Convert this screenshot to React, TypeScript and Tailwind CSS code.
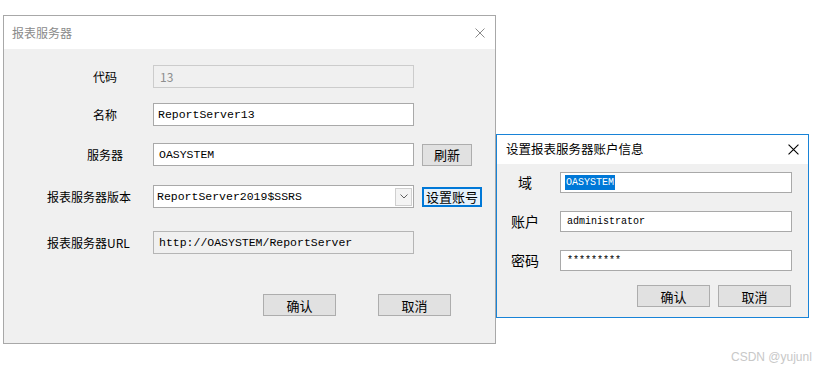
import * as React from "react";

const cjk = "font-['Noto_Sans_CJK_SC',sans-serif]";
const mono = "font-['Liberation_Mono','Noto_Sans_CJK_SC',monospace]";

function CloseIcon({ className }: { className?: string }) {
  return (
    <svg viewBox="0 0 10 10" className={className} fill="none" stroke="currentColor" strokeWidth={1}>
      <path d="M0.5 0.5 L9.5 9.5 M9.5 0.5 L0.5 9.5" />
    </svg>
  );
}

function WinButton({ children, className = "" }: { children: React.ReactNode; className?: string }) {
  return (
    <div
      className={`flex items-center justify-center border border-[#adadad] bg-[#e1e1e1] text-[13px] leading-none text-black ${cjk} ${className}`}
    >
      {children}
    </div>
  );
}

function Field({ children, className = "" }: { children?: React.ReactNode; className?: string }) {
  return (
    <div className={`flex items-center border border-[#a9a9a9] bg-white ${className}`}>{children}</div>
  );
}

function ReportServerDialog() {
  return (
    <div className="absolute left-[3px] top-[15px] flex h-[329px] w-[493px] flex-col border border-[#a8a8a8] bg-[#f0f0f0]">
      <div className="flex h-[33px] shrink-0 items-center justify-between bg-white pl-[8px] pr-[10px]">
        <span className={`text-[12px] text-[#8a8a8a] ${cjk}`}>报表服务器</span>
        <CloseIcon className="h-[10px] w-[10px] text-[#8a8a8a]" />
      </div>

      <div className={`flex flex-col text-[12px] text-black ${cjk}`}>
        {/* 代码 */}
        <div className="mt-[16px] flex h-[23px] items-center">
          <span className="w-[149px] pl-[89px]">代码</span>
          <div className="flex h-[23px] w-[261px] items-center border border-[#cccccc] bg-[#f0f0f0] pl-[6px] text-[12px] text-[#8d8d8d]">
            13
          </div>
        </div>

        {/* 名称 */}
        <div className="mt-[15px] flex h-[23px] items-center">
          <span className="w-[149px] pl-[89px]">名称</span>
          <Field className={`h-[23px] w-[261px] pl-[4px] text-[11.5px] ${mono}`}>ReportServer13</Field>
        </div>

        {/* 服务器 */}
        <div className="mt-[17px] flex h-[23px] items-center">
          <span className="w-[149px] pl-[83px]">服务器</span>
          <Field className={`h-[23px] w-[261px] pl-[5px] text-[11.5px] ${mono}`}>OASYSTEM</Field>
          <WinButton className="ml-[8px] h-[22px] w-[50px]">刷新</WinButton>
        </div>

        {/* 报表服务器版本 */}
        <div className="mt-[19px] flex h-[23px] items-center">
          <span className="w-[149px] pl-[43px]">报表服务器版本</span>
          <Field className={`h-[23px] w-[261px] justify-between pl-[3px] pr-[1px] text-[11.5px] ${mono}`}>
            <span>ReportServer2019$SSRS</span>
            <div className="flex h-[18px] w-[17px] items-center justify-center border border-[#cfcfcf] bg-[#f4f4f4]">
              <svg viewBox="0 0 8 5" className="h-[5px] w-[8px]" fill="none" stroke="#606060" strokeWidth={1}>
                <path d="M0.5 0.5 L4 4 L7.5 0.5" />
              </svg>
            </div>
          </Field>
          <div
            className={`ml-[8px] flex h-[20px] w-[60px] items-center justify-center border-2 border-[#0078d7] bg-[#e5f1fb] text-[13px] leading-none ${cjk}`}
          >
            设置账号
          </div>
        </div>

        {/* URL */}
        <div className="mt-[23px] flex h-[23px] items-center">
          <span className="w-[149px] pl-[43px]">报表服务器URL</span>
          <div
            className={`flex h-[23px] w-[261px] items-center border border-[#b5b5b5] bg-[#f0f0f0] pl-[5px] text-[11.5px] ${mono}`}
          >
            http://OASYSTEM/ReportServer
          </div>
        </div>

        <div className="mt-[40px] flex pl-[259px]">
          <WinButton className="h-[22px] w-[73px]">确认</WinButton>
          <WinButton className="ml-[42px] h-[22px] w-[73px]">取消</WinButton>
        </div>
      </div>
    </div>
  );
}

function AccountDialog() {
  return (
    <div className="absolute left-[496px] top-[134px] flex h-[184px] w-[313px] flex-col border border-[#1883d7] bg-[#f0f0f0]">
      <div className="flex h-[29px] shrink-0 items-center justify-between bg-white pl-[9px] pr-[9px]">
        <span className={`text-[12.5px] text-black ${cjk}`}>设置报表服务器账户信息</span>
        <CloseIcon className="h-[11px] w-[11px] text-black" />
      </div>

      <div className={`flex flex-col text-[14px] text-black ${cjk}`}>
        <div className="mt-[8px] flex h-[21px] items-center">
          <span className="w-[63px] pl-[21px]">域</span>
          <Field className={`h-[21px] w-[232px] pl-[4px] text-[10px] ${mono}`}>
            <span className="bg-[#0078d7] px-[1px] leading-[15px] text-white">OASYSTEM</span>
          </Field>
        </div>
        <div className="mt-[18px] flex h-[21px] items-center">
          <span className="w-[63px] pl-[14px]">账户</span>
          <Field className={`h-[21px] w-[232px] pl-[6px] text-[10px] ${mono}`}>administrator</Field>
        </div>
        <div className="mt-[18px] flex h-[21px] items-center">
          <span className="w-[63px] pl-[14px]">密码</span>
          <Field className={`h-[21px] w-[232px] pl-[6px] text-[10px] ${mono}`}>*********</Field>
        </div>
        <div className="mt-[14px] flex pl-[140px]">
          <WinButton className="h-[22px] w-[73px]">确认</WinButton>
          <WinButton className="ml-[8px] h-[22px] w-[73px]">取消</WinButton>
        </div>
      </div>
    </div>
  );
}

export default function App() {
  return (
    <div className="relative h-[378px] w-[837px] overflow-hidden bg-white">
      <ReportServerDialog />
      <AccountDialog />
      <div className="absolute left-[731px] top-[348px] font-['Liberation_Sans',sans-serif] text-[12px] text-[#c8c8c8]">
        CSDN @yujunl
      </div>
    </div>
  );
}
